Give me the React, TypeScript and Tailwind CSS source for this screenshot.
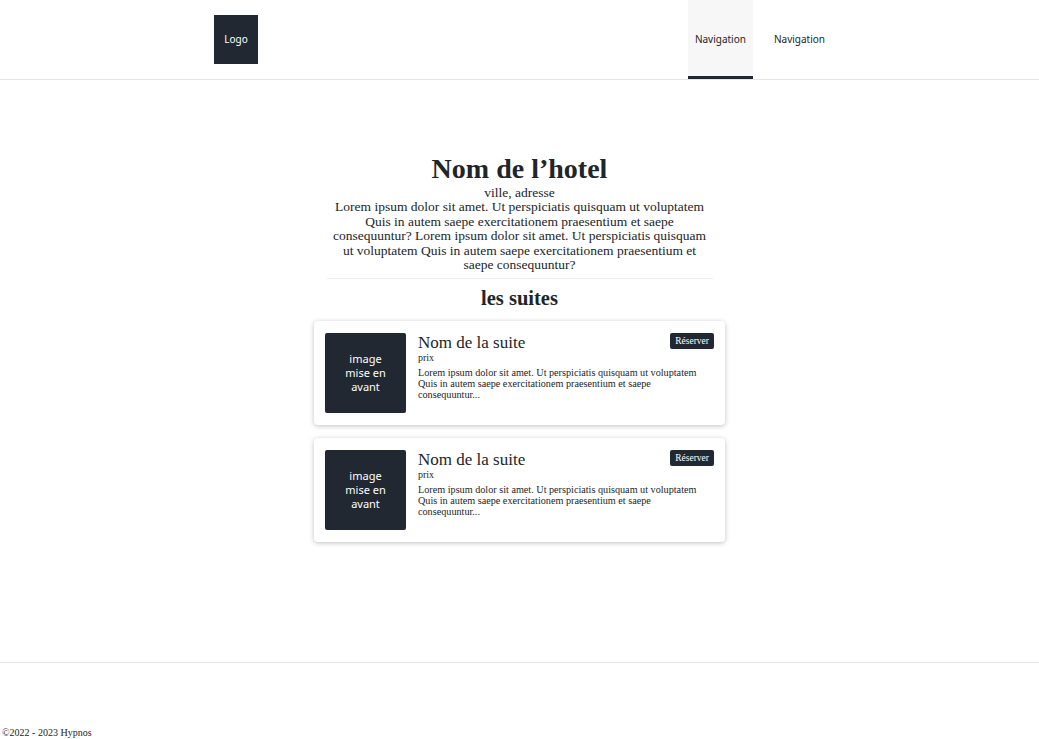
const serif = "font-['Liberation_Serif','DejaVu_Serif',serif]";
const sans = "font-['Noto_Sans','Open_Sans',sans-serif]";

const suites = [1, 2];

function SuiteCard() {
  return (
    <div className="flex gap-3 rounded-[4px] bg-white px-[11px] py-[12px] shadow-[0_1px_5px_rgba(0,0,0,0.25)]">
      <div
        className={`${sans} flex h-[80px] w-[81px] shrink-0 items-center justify-center rounded-[2px] bg-[#222831] text-center text-[11px] leading-[14px] text-white`}
      >
        image
        <br />
        mise en
        <br />
        avant
      </div>
      <div className="flex-1 text-[#212529]">
        <div className="flex items-start justify-between">
          <div>
            <h3 className="text-[17px] leading-[19px]">Nom de la suite</h3>
            <div className="text-[10px] leading-[11px]">prix</div>
          </div>
          <button className="rounded-[2px] bg-[#222831] px-[5px] py-[2px] text-[9.5px] leading-[12px] text-white">
            Réserver
          </button>
        </div>
        <p className="mt-[4px] text-[10.2px] leading-[11px]">
          Lorem ipsum dolor sit amet. Ut perspiciatis quisquam ut voluptatem
          <br />
          Quis in autem saepe exercitationem praesentium et saepe
          <br />
          consequuntur...
        </p>
      </div>
    </div>
  );
}

export default function App() {
  return (
    <div className={`${serif} min-h-[739px] bg-white text-[#212529]`}>
      {/* Header */}
      <header className="h-[80px] border-b border-[#e5e5e5]">
        <div className="ml-[214px] flex h-full w-[618px] items-stretch justify-between">
          <div className="flex items-center">
            <div
              className={`${sans} flex h-[49px] w-[44px] items-center justify-center bg-[#222831] text-[10px] text-white`}
            >
              Logo
            </div>
          </div>
          <nav className={`${sans} flex text-[10px] text-[#212529]`}>
            <a className="flex items-center border-b-[3px] border-[#222831] bg-[#f7f7f7] px-[7px] pt-[3px]">
              Navigation
            </a>
            <a className="ml-[14px] flex items-center px-[7px]">Navigation</a>
          </nav>
        </div>
      </header>

      {/* Main */}
      <main className="h-[582px] pt-[73px]">
        <section className="mx-auto flex w-[386px] flex-col items-center text-center">
          <h1 className="text-[28px] font-bold leading-[32px]">Nom de l’hotel</h1>
          <div className="text-[13.5px] leading-[15px]">ville, adresse</div>
          <p className="text-[13.5px] leading-[14.6px]">
            Lorem ipsum dolor sit amet. Ut perspiciatis quisquam ut voluptatem
            <br />
            Quis in autem saepe exercitationem praesentium et saepe
            <br />
            consequuntur? Lorem ipsum dolor sit amet. Ut perspiciatis quisquam
            <br />
            ut voluptatem Quis in autem saepe exercitationem praesentium et
            <br />
            saepe consequuntur?
          </p>
          <hr className="mt-[5px] w-full border-[#ececec]" />
          <h2 className="mt-[7px] text-[20.5px] font-bold leading-[24px]">les suites</h2>
        </section>
        <div className="mx-auto mt-[11px] flex w-[411px] flex-col gap-[13px]">
          {suites.map((s) => (
            <SuiteCard key={s} />
          ))}
        </div>
      </main>

      {/* Footer */}
      <footer className="flex h-[77px] items-end border-t border-[#e5e5e5] px-[2px]">
        <span className="text-[10px] leading-[12px]">©2022 - 2023 Hypnos</span>
      </footer>
    </div>
  );
}
